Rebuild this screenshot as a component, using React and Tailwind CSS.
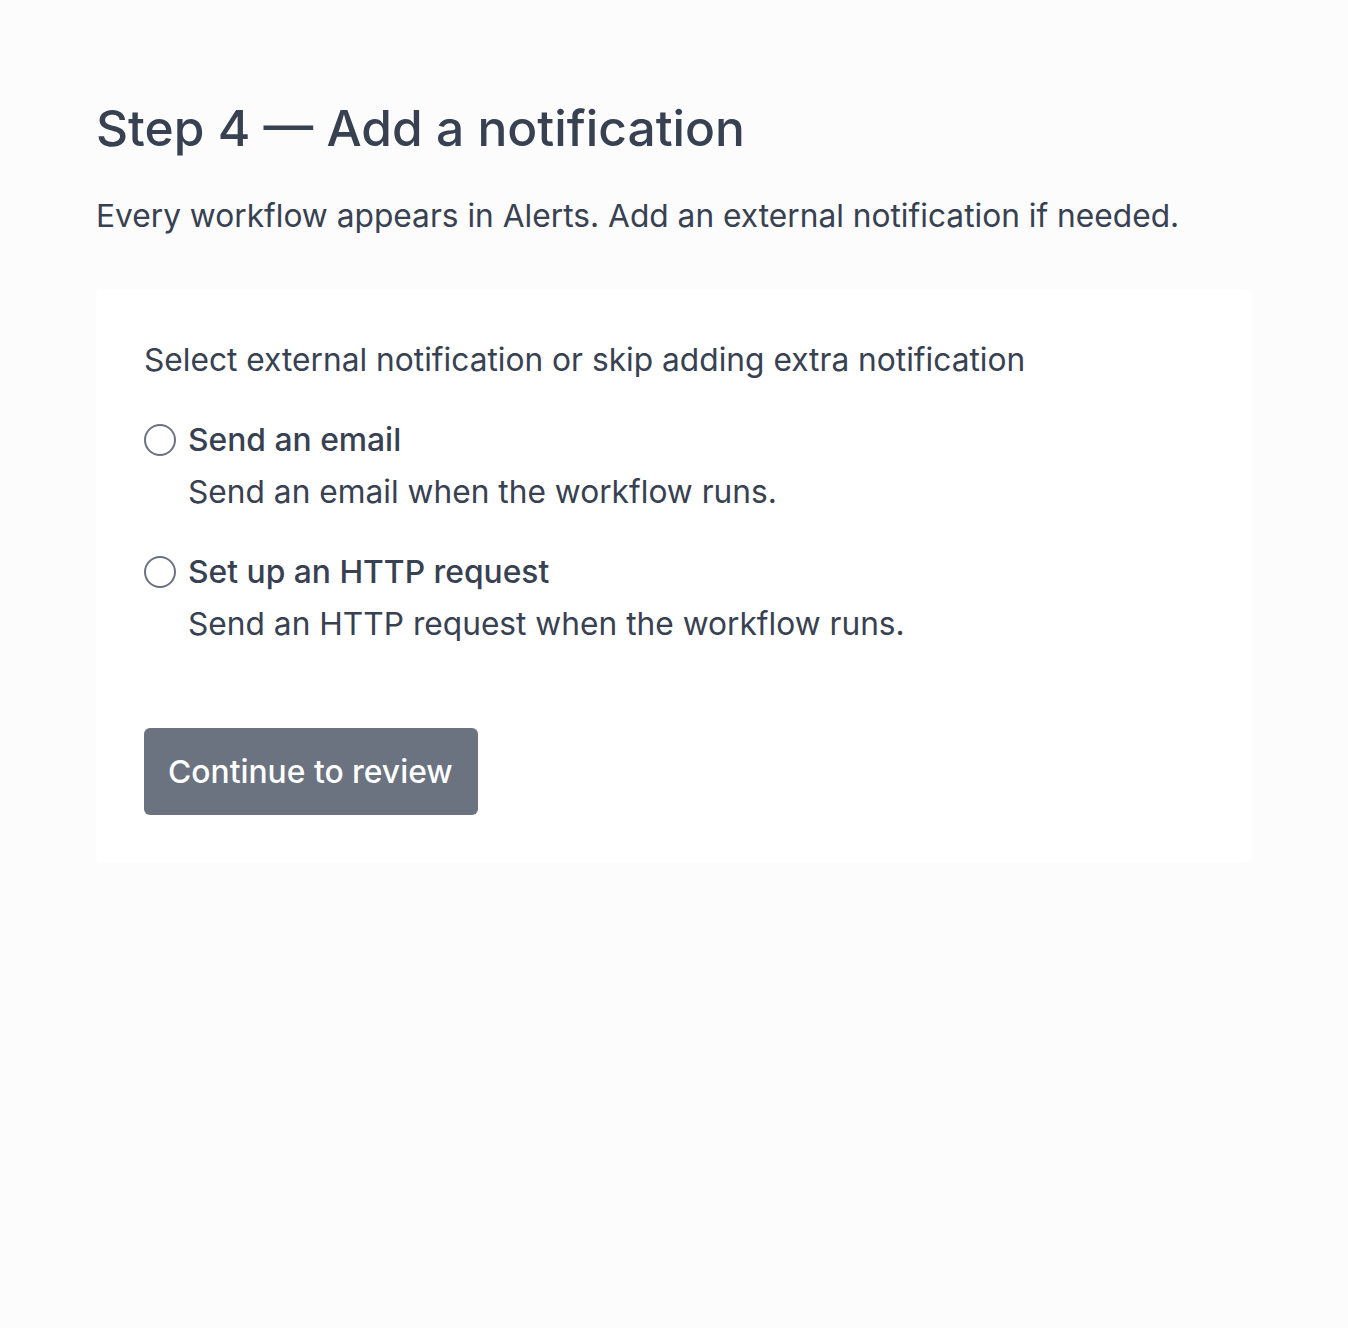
import { useState } from 'react'

const OPCIONES = [
  { id: 'email', titulo: 'Send an email', desc: 'Send an email when the workflow runs.' },
  { id: 'http', titulo: 'Set up an HTTP request', desc: 'Send an HTTP request when the workflow runs.' },
]

export default function App() {
  const [seleccion, setSeleccion] = useState('')

  return (
    <div className="min-h-screen bg-[#fcfcfc] px-24 pt-[96px] text-[#374151]" style={{ fontFamily: 'Inter, "Noto Sans", sans-serif' }}>
      <h1 className="text-[49.7px] leading-[64px] font-medium">Step 4 — Add a notification</h1>
      <p className="mt-[36px] text-[31.7px] leading-[40px]">Every workflow appears in Alerts. Add an external notification if needed.</p>

      <div className="mt-[53px] bg-white rounded-lg p-12">
        <p className="text-[31.7px] leading-[46px]">Select external notification or skip adding extra notification</p>

        <div className="mt-[37px] flex flex-col gap-[40px]">
          {OPCIONES.map(o => (
            <label key={o.id} className="flex gap-3 cursor-pointer">
              <input
                type="radio"
                name="notif"
                checked={seleccion === o.id}
                onChange={() => setSeleccion(o.id)}
                className="sr-only"
              />
              <span className="mt-[4px] w-8 h-8 shrink-0 rounded-full border-2 border-[#6b7280] bg-white flex items-center justify-center">
                {seleccion === o.id && <span className="w-4 h-4 rounded-full bg-[#6b7280]" />}
              </span>
              <span className="flex flex-col">
                <span className="text-[31.8px] leading-[40px] font-medium">{o.titulo}</span>
                <span className="mt-[12px] text-[31.7px] leading-[40px]">{o.desc}</span>
              </span>
            </label>
          ))}
        </div>

        <button
          type="button"
          className="mt-[84px] h-[87px] w-[334px] flex items-center bg-[#6b7280] text-white text-[31.8px] leading-[40px] font-medium px-6 rounded-md"
        >
          Continue to review
        </button>
      </div>
    </div>
  )
}
